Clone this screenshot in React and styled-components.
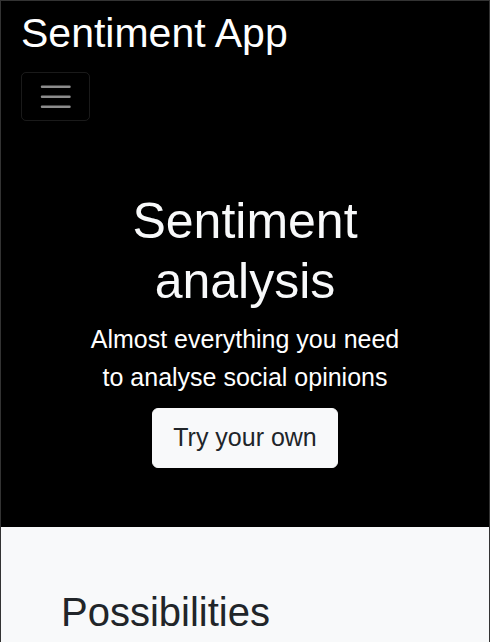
import React from "react"
import styled, { createGlobalStyle } from "styled-components"

const GlobalStyle = createGlobalStyle`
  html, body {
    margin: 0;
    padding: 0;
    background: #f8f9fa;
  }
  body {
    font-family: "Liberation Sans", Arial, sans-serif;
  }
  * {
    box-sizing: border-box;
  }
`

const Frame = styled.div`
  min-height: 100vh;
  border: 1px solid #333;
  border-bottom: none;
  background: #f8f9fa;
  overflow: hidden;
`

const NavBar = styled.nav`
  background: #000;
  padding: 2px 20px 0;
  display: flex;
  flex-direction: column;
  align-items: flex-start;
`

const Brand = styled.a`
  color: #fff;
  font-size: 41px;
  line-height: 60px;
  text-decoration: none;
`

const Toggler = styled.button`
  margin-top: 9px;
  width: 69px;
  height: 49px;
  background: transparent;
  border: 1px solid rgba(255, 255, 255, 0.1);
  border-radius: 5px;
  display: flex;
  align-items: center;
  justify-content: center;
  padding: 0;
  cursor: pointer;
`

const Hero = styled.header`
  background: #000;
  padding: 70px 20px 59px;
  display: flex;
  justify-content: center;
`

const HeroInner = styled.div`
  width: 320px;
  text-align: center;
  display: flex;
  flex-direction: column;
  align-items: center;
`

const Title = styled.h1`
  margin: 0 0 10px;
  font-size: 50px;
  line-height: 60px;
  font-weight: 400;
  color: #f8f9fa;
`

const Lead = styled.p`
  margin: 0 0 12px;
  font-size: 25px;
  line-height: 37.5px;
  color: #fff;
`

const LightButton = styled.button`
  font-family: inherit;
  font-size: 25px;
  line-height: 37.5px;
  padding: 10px 20px;
  border: 1px solid #f8f9fa;
  border-radius: 6px;
  background: #f8f9fa;
  color: #212529;
  cursor: pointer;
`

const Section = styled.section`
  padding: 61px 60px 40px;
  background: #f8f9fa;
`

const SectionTitle = styled.h2`
  margin: 0;
  font-size: 40px;
  line-height: 48px;
  font-weight: 400;
  color: #212529;
`

const MenuIcon = () => (
  <svg width="37.5" height="37.5" viewBox="0 0 30 30">
    <path
      d="M4 7h22M4 15h22M4 23h22"
      stroke="rgba(255,255,255,0.55)"
      strokeWidth="2"
      strokeLinecap="round"
      strokeMiterlimit="10"
    />
  </svg>
)

export default function App() {
  return (
    <>
      <GlobalStyle />
      <Frame>
        <NavBar>
          <Brand href="#">Sentiment App</Brand>
          <Toggler aria-label="Toggle navigation">
            <MenuIcon />
          </Toggler>
        </NavBar>
        <Hero>
          <HeroInner>
            <Title>Sentiment analysis</Title>
            <Lead>Almost everything you need to analyse social opinions</Lead>
            <LightButton>Try your own</LightButton>
          </HeroInner>
        </Hero>
        <Section>
          <SectionTitle>Possibilities</SectionTitle>
        </Section>
      </Frame>
    </>
  )
}
